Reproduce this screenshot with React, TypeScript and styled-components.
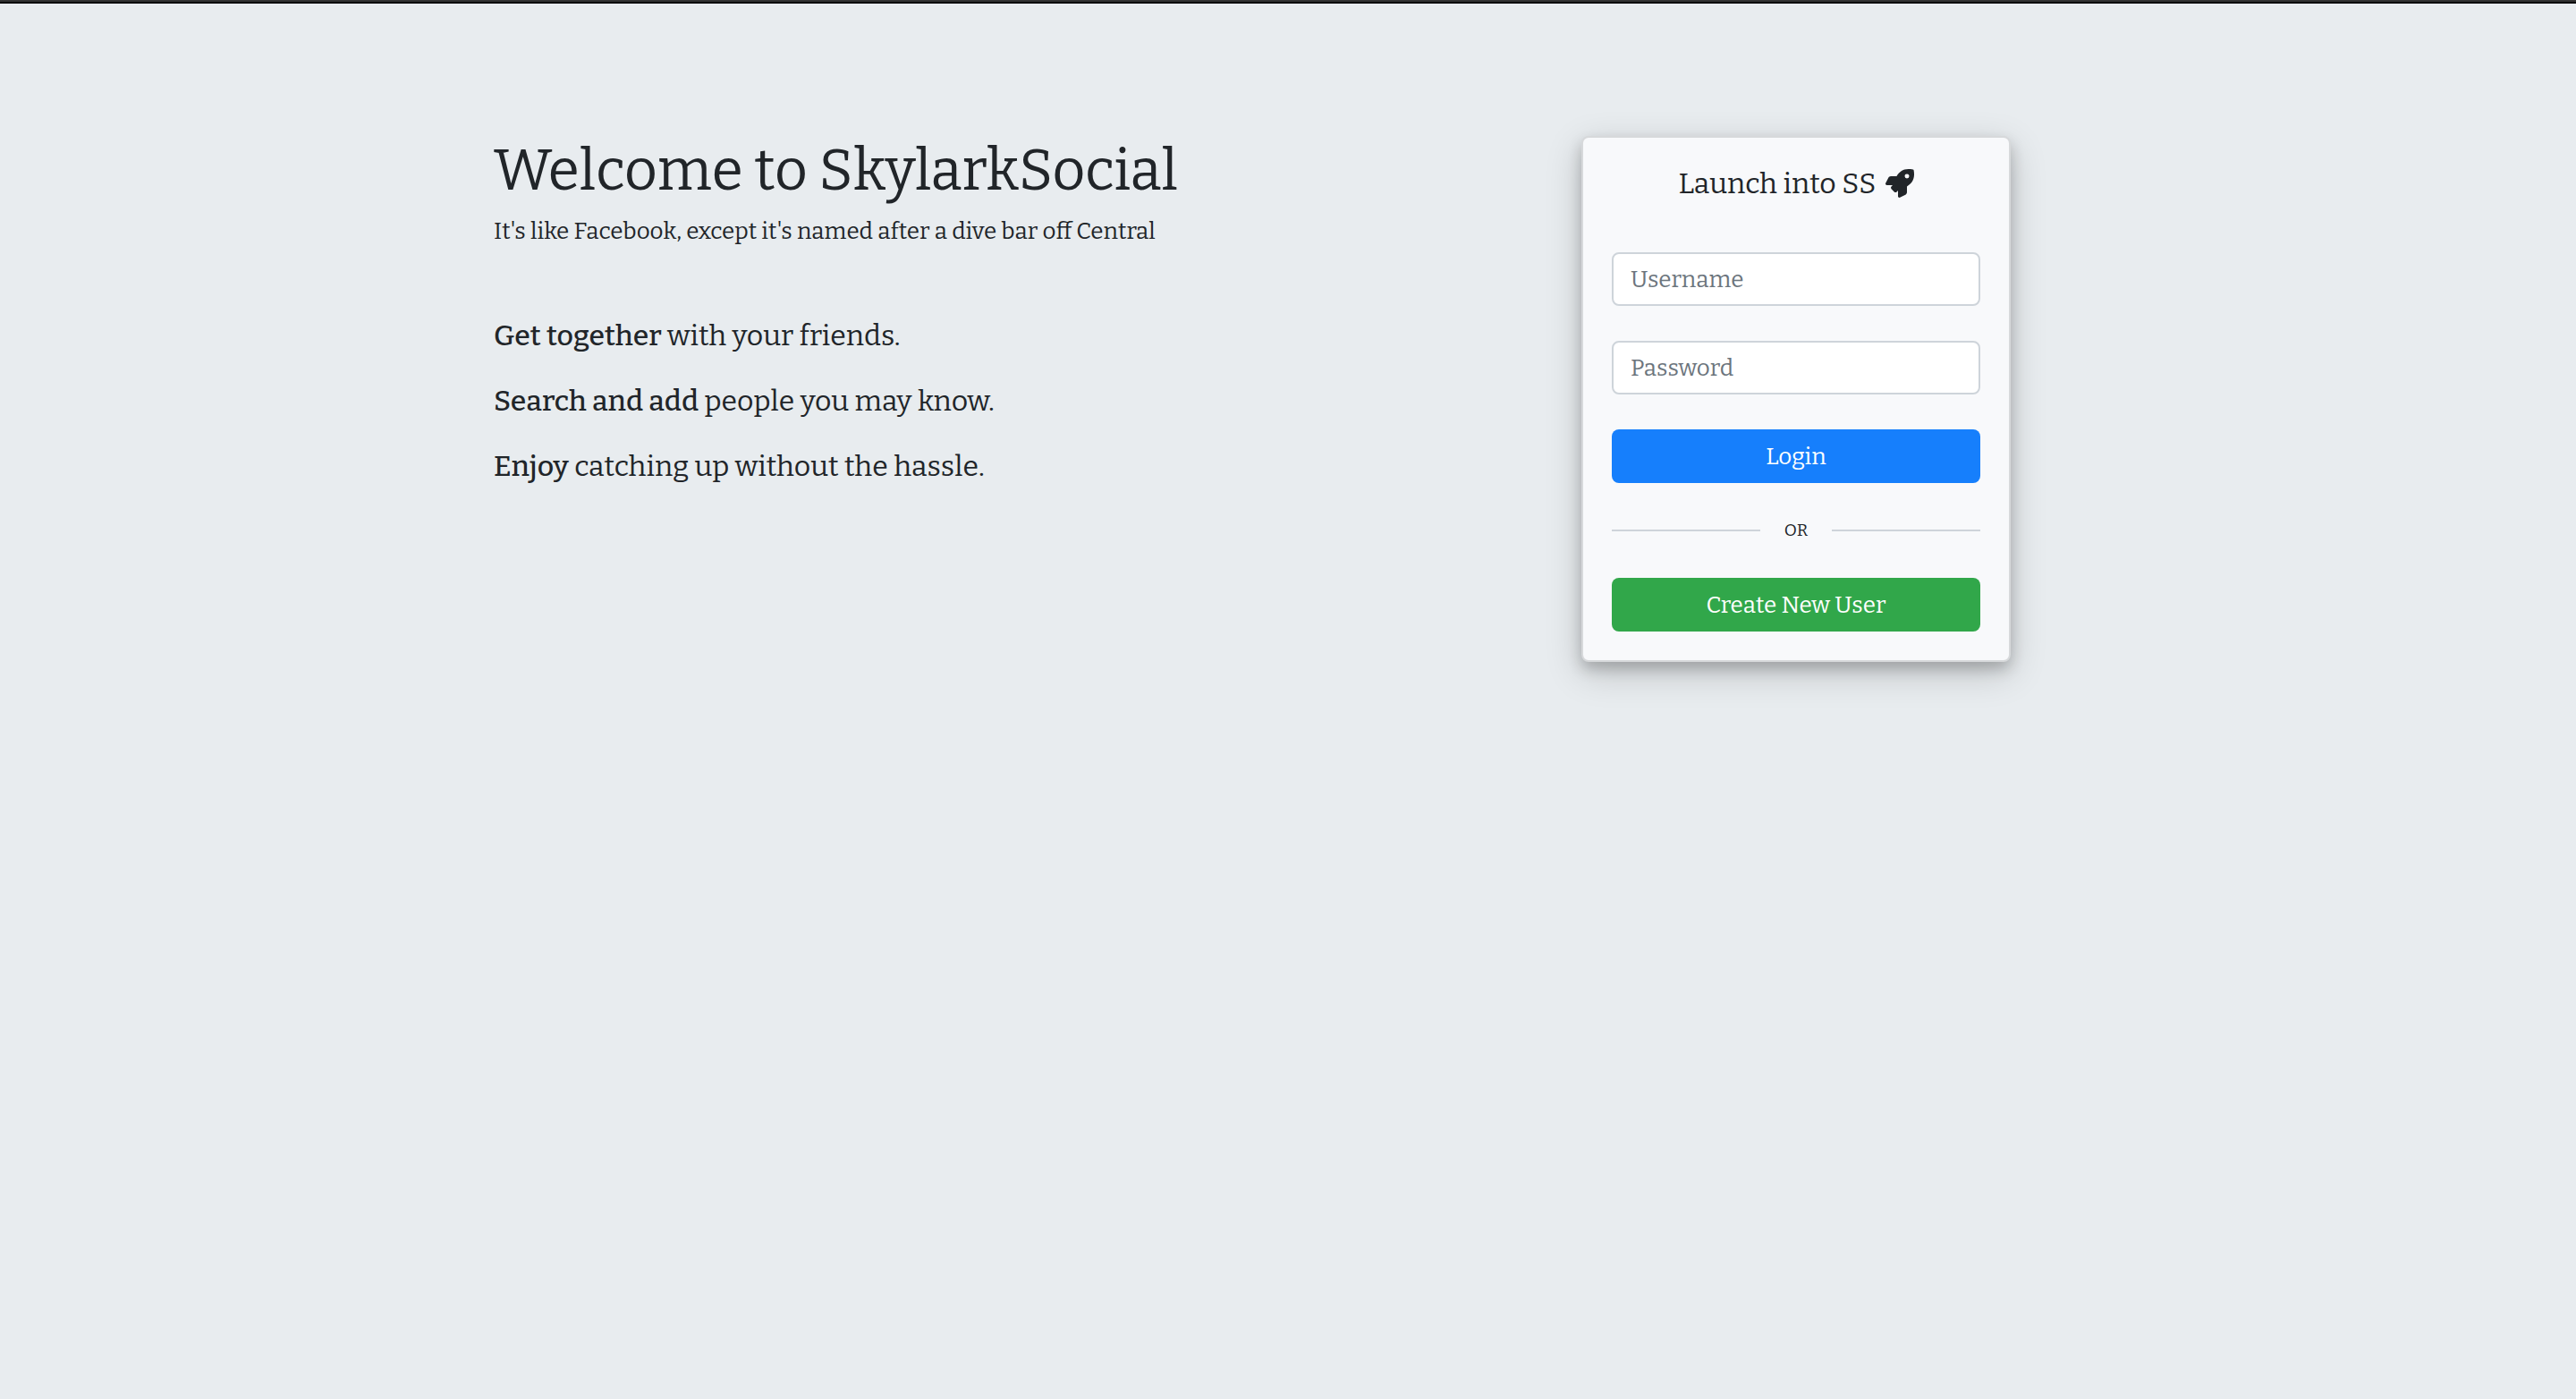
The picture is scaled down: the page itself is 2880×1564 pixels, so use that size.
import React from "react";
import styled, { createGlobalStyle } from "styled-components";
import { FaRocket } from "react-icons/fa";

const GlobalStyle = createGlobalStyle`
  *, *::before, *::after { box-sizing: border-box; }
  html { background: #e8ecef; }
  body {
    margin: 0;
    min-height: 100vh;
    background: #e8ecef;
    color: #212529;
    font-family: Bitter, "DejaVu Serif Condensed", "DejaVu Serif", serif;
    font-size: 26px;
    line-height: 38px;
  }
`;

const TopBar = styled.div`
  height: 4px;
  background: #333;
  border-bottom: 2px solid #000;
`;

const Container = styled.main`
  max-width: 1776px;
  margin: 0 auto;
  padding: 148px 0 64px;
  display: grid;
  grid-template-columns: 1fr 640px;
  align-items: start;
`;

const Title = styled.h1`
  margin: 0 0 10px;
  font-size: 64px;
  font-weight: 400;
  line-height: 78px;
`;

const Tagline = styled.p`
  margin: 0;
`;

const Features = styled.div`
  display: grid;
  gap: 25px;
  margin-top: 73px;
  font-size: 32px;
  line-height: 48px;
`;

const Feature = styled.p`
  margin: 0;
`;

const Strong = styled.span`
  font-weight: 500;
`;

const Card = styled.section`
  justify-self: center;
  width: 480px;
  padding: 32px;
  border: 2px solid #d7d9db;
  border-radius: 8px;
  background: #f8f9fb;
  box-shadow: 0 8px 16px rgba(0, 0, 0, 0.2), 0 12px 40px rgba(0, 0, 0, 0.19);
`;

const CardTitle = styled.h2`
  display: flex;
  justify-content: center;
  align-items: center;
  gap: 10px;
  margin: 0 0 58px;
  font-size: 32px;
  font-weight: 400;
  line-height: 38px;
`;

const Form = styled.form`
  display: grid;
  gap: 39px;
`;

const Field = styled.input`
  width: 100%;
  height: 60px;
  padding: 0 19px;
  border: 2px solid #ced4da;
  border-radius: 8px;
  background: #fff;
  color: #495057;
  font: inherit;
  &::placeholder { color: #6c757d; opacity: 1; }
`;

const Button = styled.button<{ $color: string }>`
  width: 100%;
  height: 60px;
  padding: 2px 0 0;
  border: 0;
  border-radius: 8px;
  background: ${(p) => p.$color};
  color: #fff;
  font: inherit;
`;

const Divider = styled.div`
  display: flex;
  align-items: center;
  gap: 27px;
  margin: 38px 0;
  font-size: 19px;
  line-height: 30px;
  &::before, &::after {
    content: "";
    flex: 1;
    height: 2px;
    background: #ced4da;
  }
`;

export default function App() {
  return (
    <>
      <GlobalStyle />
      <TopBar />
      <Container>
        <div>
          <Title>Welcome to SkylarkSocial</Title>
          <Tagline>It's like Facebook, except it's named after a dive bar off Central</Tagline>
          <Features>
            <Feature><Strong>Get together</Strong> with your friends.</Feature>
            <Feature><Strong>Search and add</Strong> people you may know.</Feature>
            <Feature><Strong>Enjoy</Strong> catching up without the hassle.</Feature>
          </Features>
        </div>
        <Card>
          <CardTitle>
            Launch into SS <FaRocket size={32} aria-hidden />
          </CardTitle>
          <Form onSubmit={(e) => e.preventDefault()}>
            <Field type="text" placeholder="Username" aria-label="Username" />
            <Field type="password" placeholder="Password" aria-label="Password" />
            <Button type="submit" $color="#167ffc">Login</Button>
          </Form>
          <Divider>OR</Divider>
          <Button type="button" $color="#31a74a">Create New User</Button>
        </Card>
      </Container>
    </>
  );
}
